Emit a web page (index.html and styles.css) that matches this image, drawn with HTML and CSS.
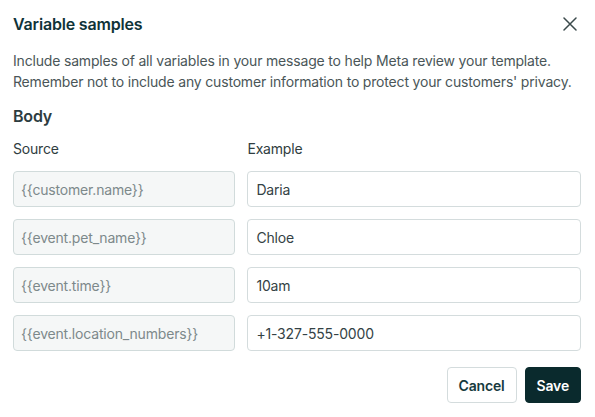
FILE: index.html
```html
<!DOCTYPE html>
<html lang="en">

<head>
    <meta charset="UTF-8">
    <meta name="viewport" content="width=device-width, initial-scale=1.0">
    <title>Variable samples</title>
    <link rel="stylesheet" href="styles.css">
</head>

<body>
    <div class="dialog">
        <div class="dialog-header">
            <h2 class="dialog-title">Variable samples</h2>
            <button class="close-btn" aria-label="Close">
                <svg width="14" height="14" viewBox="0 0 14 14">
                    <path d="M1 1L13 13M13 1L1 13" stroke="#3b4a4c" stroke-width="1.5" stroke-linecap="round" />
                </svg>
            </button>
        </div>

        <p class="intro">
            Include samples of all variables in your message to help Meta review your template.
            Remember not to include any customer information to protect your customers' privacy.
        </p>

        <h3 class="section-title">Body</h3>

        <div class="samples-grid">
            <div class="col-label">Source</div>
            <div class="col-label">Example</div>

            <input class="field field-source" type="text" placeholder="{{customer.name}}" disabled>
            <input class="field" type="text" value="Daria">

            <input class="field field-source" type="text" placeholder="{{event.pet_name}}" disabled>
            <input class="field" type="text" value="Chloe">

            <input class="field field-source" type="text" placeholder="{{event.time}}" disabled>
            <input class="field" type="text" value="10am">

            <input class="field field-source" type="text" placeholder="{{event.location_numbers}}" disabled>
            <input class="field" type="text" value="+1-327-555-0000">
        </div>

        <div class="dialog-actions">
            <button class="btn btn-secondary">Cancel</button>
            <button class="btn btn-primary">Save</button>
        </div>
    </div>
</body>

</html>
```

FILE: styles.css
```css
* {
    box-sizing: border-box;
}

body {
    margin: 0;
    font-family: Inter, "Noto Sans", sans-serif;
    letter-spacing: -0.18px;
    background-color: #fff;
    color: #495557;
}

.dialog {
    width: 595px;
    padding: 14px 14px 14px 13px;
}

.dialog-header {
    display: flex;
    align-items: center;
    justify-content: space-between;
    height: 20px;
}

.dialog-title {
    margin: 0;
    font-size: 16px;
    line-height: 20px;
    font-weight: 600;
    color: #0f3338;
}

.close-btn {
    display: flex;
    align-items: center;
    justify-content: center;
    width: 20px;
    height: 20px;
    margin-right: 1px;
    padding: 0;
    border: none;
    background: none;
    cursor: pointer;
}

.intro {
    margin: 16px 0 0;
    font-size: 14px;
    line-height: 21px;
    color: #4a5658;
}

.section-title {
    margin: 12px 0 0;
    font-size: 16px;
    line-height: 24px;
    font-weight: 600;
    color: #2d3c3f;
}

.samples-grid {
    display: grid;
    grid-template-columns: minmax(0, 2fr) minmax(0, 3fr);
    column-gap: 12px;
    row-gap: 12px;
    margin-top: 11px;
}

.col-label {
    font-size: 14px;
    line-height: 20px;
    color: #2f3d40;
}

.field {
    width: 100%;
    height: 36px;
    padding: 0 8px;
    border: 1px solid #d4dcdd;
    border-radius: 4px;
    font-family: inherit;
    font-size: 14px;
    letter-spacing: inherit;
    color: #344245;
    background-color: #fff;
}

.field-source {
    background-color: #f5f7f7;
    border-color: #d1dbdb;
    padding-left: 7px;
}

.field-source::placeholder {
    color: #7d898b;
}

.dialog-actions {
    display: flex;
    justify-content: flex-end;
    gap: 8px;
    margin-top: 16px;
}

.btn {
    height: 36px;
    padding: 0 11px;
    border-radius: 4px;
    font-family: inherit;
    font-size: 14px;
    font-weight: 600;
    letter-spacing: inherit;
    cursor: pointer;
}

.btn-secondary {
    background-color: #fff;
    color: #173a3e;
    border: 1px solid #d4dcdd;
}

.btn-primary {
    background-color: #0a2a2d;
    color: #fff;
    border: 1px solid #0a2a2d;
}
```
